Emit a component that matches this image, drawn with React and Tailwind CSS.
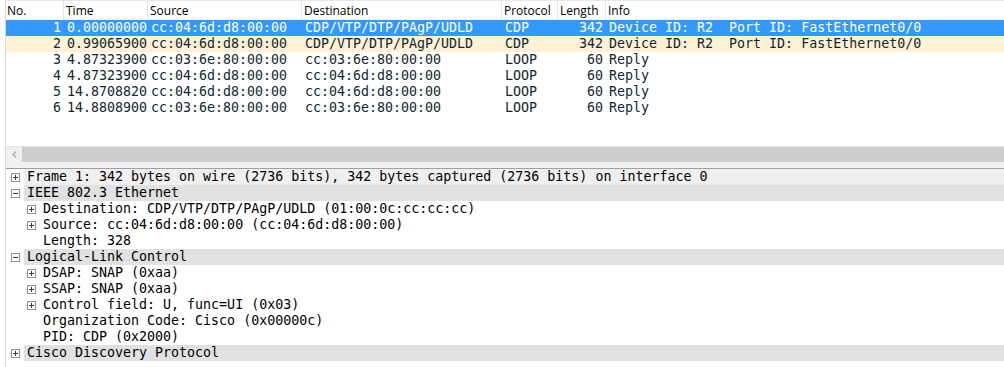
import React from 'react'

const packets = [
  { no: '1', time: '0.00000000', src: 'cc:04:6d:d8:00:00', dst: 'CDP/VTP/DTP/PAgP/UDLD', proto: 'CDP', len: '342', info: 'Device ID: R2  Port ID: FastEthernet0/0', tone: 'selected' },
  { no: '2', time: '0.99065900', src: 'cc:04:6d:d8:00:00', dst: 'CDP/VTP/DTP/PAgP/UDLD', proto: 'CDP', len: '342', info: 'Device ID: R2  Port ID: FastEthernet0/0', tone: 'cdp' },
  { no: '3', time: '4.87323900', src: 'cc:03:6e:80:00:00', dst: 'cc:03:6e:80:00:00', proto: 'LOOP', len: '60', info: 'Reply' },
  { no: '4', time: '4.87323900', src: 'cc:04:6d:d8:00:00', dst: 'cc:04:6d:d8:00:00', proto: 'LOOP', len: '60', info: 'Reply' },
  { no: '5', time: '14.8708820', src: 'cc:04:6d:d8:00:00', dst: 'cc:04:6d:d8:00:00', proto: 'LOOP', len: '60', info: 'Reply' },
  { no: '6', time: '14.8808900', src: 'cc:03:6e:80:00:00', dst: 'cc:03:6e:80:00:00', proto: 'LOOP', len: '60', info: 'Reply' }
]

const details = [
  { level: 0, box: 'plus', text: 'Frame 1: 342 bytes on wire (2736 bits), 342 bytes captured (2736 bits) on interface 0', bg: 'bg-[#efefef]' },
  { level: 0, box: 'minus', text: 'IEEE 802.3 Ethernet', bg: 'bg-[#e1e1e1]' },
  { level: 1, box: 'plus', text: 'Destination: CDP/VTP/DTP/PAgP/UDLD (01:00:0c:cc:cc:cc)' },
  { level: 1, box: 'plus', text: 'Source: cc:04:6d:d8:00:00 (cc:04:6d:d8:00:00)' },
  { level: 1, text: 'Length: 328' },
  { level: 0, box: 'minus', text: 'Logical-Link Control', bg: 'bg-[#e1e1e1]' },
  { level: 1, box: 'plus', text: 'DSAP: SNAP (0xaa)' },
  { level: 1, box: 'plus', text: 'SSAP: SNAP (0xaa)' },
  { level: 1, box: 'plus', text: 'Control field: U, func=UI (0x03)' },
  { level: 1, text: 'Organization Code: Cisco (0x00000c)' },
  { level: 1, text: 'PID: CDP (0x2000)' },
  { level: 0, box: 'plus', text: 'Cisco Discovery Protocol', bg: 'bg-[#e1e1e1]' }
]

function Expander({ kind }) {
  return (
    <svg width="9" height="9" viewBox="0 0 9 9" shapeRendering="crispEdges">
      <rect x="0.5" y="0.5" width="8" height="8" fill="#fff" stroke="#939393" />
      <path d="M2 4.5h5" stroke="#3c3c3c" />
      {kind === 'plus' && <path d="M4.5 2v5" stroke="#3c3c3c" />}
    </svg>
  )
}

function PacketRow({ p }) {
  const tone =
    p.tone === 'selected'
      ? 'bg-[#3399ff] text-white'
      : p.tone === 'cdp'
        ? 'bg-[#fef1d6] text-[#12272e]'
        : 'bg-white text-[#12272e]'
  return (
    <div className={`flex h-[16px] whitespace-pre leading-[15px] ${tone}`}>
      <div className="w-[58px] shrink-0 pr-[3px] text-right">{p.no}</div>
      <div className="w-[84px] shrink-0 pl-[3px]">{p.time}</div>
      <div className="w-[154px] shrink-0 pl-[3px]">{p.src}</div>
      <div className="w-[200px] shrink-0 pl-[3px]">{p.dst}</div>
      <div className="w-[56px] shrink-0 pl-[3px]">{p.proto}</div>
      <div className="w-[48px] shrink-0 pr-[3px] text-right">{p.len}</div>
      <div className="min-w-0 flex-1 pl-[3px]">{p.info}</div>
    </div>
  )
}

export default function App() {
  return (
    <div className="flex h-[367px] w-[1004px] overflow-hidden bg-white font-['DejaVu_Sans_Mono',monospace] text-[13.3px] text-black">
      <div className="w-[5px] shrink-0" />
      <div className="w-px shrink-0 bg-[#dadada]" />

      <div className="flex min-w-0 flex-1 flex-col">
        {/* Packet list header */}
        <div className="flex h-[20px] border-y border-t-[#e8e8e8] border-b-[#f0f0f0] font-['Open_Sans',sans-serif] text-[12px] leading-[16px]">
          <div className="w-[58px] shrink-0 border-r border-[#e5e5e5] pl-[1px] pt-[2px]">No.</div>
          <div className="w-[84px] shrink-0 border-r border-[#e5e5e5] pl-[2px] pt-[2px]">Time</div>
          <div className="w-[154px] shrink-0 border-r border-[#e5e5e5] pl-[2px] pt-[2px]">Source</div>
          <div className="w-[200px] shrink-0 border-r border-[#e5e5e5] pl-[2px] pt-[2px]">Destination</div>
          <div className="w-[56px] shrink-0 border-r border-[#e5e5e5] pl-[2px] pt-[2px]">Protocol</div>
          <div className="w-[48px] shrink-0 border-r border-[#e5e5e5] pl-[2px] pt-[2px]">Length</div>
          <div className="flex-1 pl-[2px] pt-[2px]">Info</div>
        </div>

        {/* Packet rows */}
        <div className="flex flex-col">
          {packets.map((p) => (
            <PacketRow key={p.no} p={p} />
          ))}
        </div>

        <div className="h-[30px] shrink-0" />
        <div className="h-px shrink-0 bg-[#e6e6e6]" />

        {/* Horizontal scrollbar */}
        <div className="flex h-[15px] shrink-0">
          <div className="flex w-[16px] shrink-0 items-center justify-center bg-[#f0f0f0]">
            <svg width="5" height="7" viewBox="0 0 5 7">
              <path d="M4 0.5L1 3.5L4 6.5" fill="none" stroke="#a8a8a8" strokeWidth="1.2" />
            </svg>
          </div>
          <div className="flex-1 bg-[#cdcdcd]" />
        </div>

        {/* Splitter */}
        <div className="h-[6px] shrink-0 bg-[#f0f0f0]" />
        <div className="h-px shrink-0 bg-[#a0a0a0]" />

        {/* Packet details tree */}
        <div className="flex flex-col">
          {details.map((d, i) => (
            <div key={i} className="flex h-[16px] whitespace-pre leading-[15px]">
              <div className={`flex shrink-0 items-center ${d.level === 0 ? 'w-[18px] pl-[5px]' : 'w-[34px] pl-[21px]'}`}>
                {d.box && <Expander kind={d.box} />}
              </div>
              <div className={`min-w-0 flex-1 pl-[3px] ${d.bg || ''}`}>{d.text}</div>
            </div>
          ))}
        </div>
      </div>
    </div>
  )
}
